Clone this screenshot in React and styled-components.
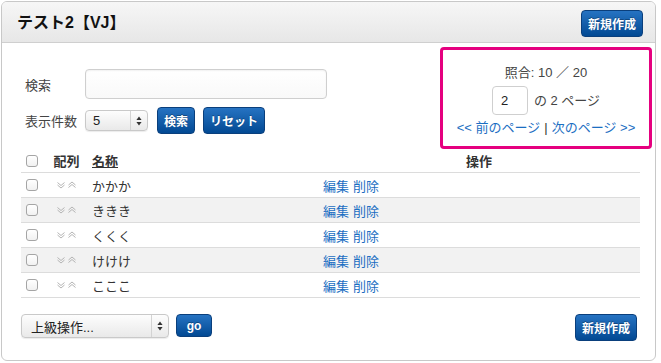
import styled, { createGlobalStyle } from 'styled-components'

const GlobalStyle = createGlobalStyle`
  body {
    margin: 0;
    background: #fff;
    font-family: "Liberation Sans", "Noto Sans CJK JP", sans-serif;
    font-size: 13px;
    color: #333;
  }
`

const Panel = styled.div`
  width: 655px;
  height: 360px;
  margin: 1px 0 0 1px;
  box-sizing: border-box;
  border: 1px solid #c8c8c8;
  border-radius: 6px;
  background: #fff;
  display: flex;
  flex-direction: column;
  overflow: hidden;
`

const Header = styled.div`
  height: 40px;
  flex-shrink: 0;
  display: flex;
  align-items: center;
  justify-content: space-between;
  padding: 0 12px 0 15px;
  background: linear-gradient(#f6f6f6, #e7e7e7);
  border-bottom: 1px solid #cfcfcf;
`

const Title = styled.h1`
  margin: 0 0 2px;
  font-size: 16px;
  font-weight: bold;
  color: #111;
`

const BlueButton = styled.button`
  height: ${p => p.h || 27}px;
  min-width: ${p => p.w || 0}px;
  padding: 0 6px;
  box-sizing: border-box;
  border: 1px solid #0a3f7c;
  border-radius: 4px;
  background: linear-gradient(#2673c2, #024993);
  color: #fff;
  font-family: inherit;
  font-size: 12px;
  font-weight: bold;
  text-shadow: 0 -1px 0 rgba(0, 0, 0, 0.3);
  cursor: pointer;
  margin-top: ${p => p.mt || 0}px;
`

const Body = styled.div`
  flex: 1;
  display: flex;
  flex-direction: column;
  padding: 4px 15px 0 19px;
`

const TopSection = styled.div`
  display: flex;
  justify-content: space-between;
  align-items: flex-start;
`

const SearchForm = styled.div`
  margin-top: 22px;
  display: grid;
  grid-template-columns: 64px auto;
  row-gap: 8px;
  align-items: center;
`

const Label = styled.span`
  padding-left: 4px;
  font-size: 13px;
  color: #444;
`

const TextInput = styled.input`
  width: 242px;
  height: 30px;
  box-sizing: border-box;
  border: 1px solid #cfcfcf;
  border-radius: 4px;
  background: linear-gradient(#fff, #f9f9f9);
  box-shadow: inset 0 1px 2px rgba(0, 0, 0, 0.06);
  outline: none;
`

const ControlRow = styled.div`
  display: flex;
  align-items: center;
  gap: 8px;
`

const SelectBox = styled.div`
  width: ${p => p.w}px;
  height: ${p => p.h}px;
  box-sizing: border-box;
  display: flex;
  align-items: stretch;
  border: 1px solid #c9c9c9;
  border-radius: 4px;
  background: linear-gradient(#fdfdfd, #e9e9e9);
  box-shadow: 0 1px 1px rgba(0, 0, 0, 0.08);
  margin-right: ${p => p.mr || 0}px;
`

const SelectText = styled.span`
  flex: 1;
  display: flex;
  align-items: center;
  padding-left: ${p => p.pl || 8}px;
  font-size: 13px;
  color: #222;
`

const SelectSpin = styled.span`
  width: 16px;
  border-left: 1px solid #d3d3d3;
  display: flex;
  align-items: center;
  justify-content: center;
`

const Pager = styled.div`
  width: 212px;
  height: 102px;
  box-sizing: border-box;
  margin-right: -12px;
  border: 3px solid #e5007f;
  border-radius: 4px;
  display: flex;
  flex-direction: column;
  align-items: center;
  padding-top: 14px;
`

const PagerLine = styled.div`
  line-height: 18px;
  font-size: 13px;
  color: #444;
  display: flex;
  align-items: center;
  gap: 6px;
  margin-top: ${p => p.mt || 0}px;
`

const PageInput = styled.div`
  width: 36px;
  height: 29px;
  box-sizing: border-box;
  border: 1px solid #cfcfcf;
  border-radius: 4px;
  display: flex;
  align-items: center;
  padding-left: 8px;
  font-size: 13px;
  color: #222;
`

const Link = styled.a`
  color: #1b6ec2;
  text-decoration: none;
`

const Sep = styled.span`
  color: #333;
  margin: 0 4px;
`

const Table = styled.div`
  display: grid;
  grid-template-columns: 24px 43px 230px 1fr;
`

const Row = styled.div`
  display: contents;
  & > div {
    height: ${p => (p.head ? 23 : 24)}px;
    border-bottom: 1px solid #dcdcdc;
    background: ${p => (p.shade ? '#f2f2f2' : 'transparent')};
    display: flex;
    align-items: center;
  }
`

const Cell = styled.div`
  justify-content: ${p => (p.center ? 'center' : 'flex-start')};
  padding-left: ${p => p.pl || 0}px;
  font-size: 13px;
  font-weight: ${p => (p.bold ? 'bold' : 'normal')};
  color: #333;
`

const SortLink = styled.span`
  text-decoration: underline;
`

const Check = styled.span`
  width: 12px;
  height: 12px;
  box-sizing: border-box;
  border: 1px solid #a5a5a5;
  border-radius: 3px;
  background: linear-gradient(#fff, #f1f1f1);
`

const ActionLink = styled(Link)`
  margin-right: 4px;
`

const BottomBar = styled.div`
  display: flex;
  align-items: flex-start;
  margin-top: 16px;
`

const Spacer = styled.div`
  flex: 1;
`

const Updown = () => (
  <svg width="6" height="10" viewBox="0 0 6 10">
    <path d="M3 0.5 L5.6 4 H0.4 Z M3 9.5 L5.6 6 H0.4 Z" fill="#333" />
  </svg>
)

const SortArrows = () => (
  <svg width="20" height="8" viewBox="0 0 20 8" fill="none" stroke="#b4b4b4" strokeWidth="1">
    <polyline points="0.5,1.5 4,4.5 7.5,1.5" />
    <polyline points="0.5,4 4,7 7.5,4" />
    <polyline points="11.5,4 15,1 18.5,4" />
    <polyline points="11.5,6.5 15,3.5 18.5,6.5" />
  </svg>
)

const items = ['かかか', 'ききき', 'くくく', 'けけけ', 'こここ']

const App = () => {
  return (
    <>
      <GlobalStyle />
      <Panel>
        <Header>
          <Title>テスト2【VJ】</Title>
          <BlueButton w={59} mt={2}>新規作成</BlueButton>
        </Header>
        <Body>
          <TopSection>
            <SearchForm>
              <Label>検索</Label>
              <TextInput />
              <Label>表示件数</Label>
              <ControlRow>
                <SelectBox w={63} h={21} mr={1}>
                  <SelectText pl={7}>5</SelectText>
                  <SelectSpin><Updown /></SelectSpin>
                </SelectBox>
                <BlueButton w={38}>検索</BlueButton>
                <BlueButton w={60}>リセット</BlueButton>
              </ControlRow>
            </SearchForm>
            <Pager>
              <PagerLine>照合: 10 ／ 20</PagerLine>
              <PagerLine mt={4}>
                <PageInput>2</PageInput>
                <span>の 2 ページ</span>
              </PagerLine>
              <PagerLine mt={4}>
                <span>
                  <Link href="#">&lt;&lt; 前のページ</Link>
                  <Sep>|</Sep>
                  <Link href="#">次のページ &gt;&gt;</Link>
                </span>
              </PagerLine>
            </Pager>
          </TopSection>

          <Table>
            <Row head>
              <Cell pl={5}><Check /></Cell>
              <Cell center bold>配列</Cell>
              <Cell pl={4} bold><SortLink>名称</SortLink></Cell>
              <Cell center bold>操作</Cell>
            </Row>
            {items.map((name, i) => (
              <Row key={name} shade={i % 2 === 1}>
                <Cell pl={5}><Check /></Cell>
                <Cell center><SortArrows /></Cell>
                <Cell pl={4}>{name}</Cell>
                <Cell pl={5}>
                  <ActionLink href="#">編集</ActionLink>
                  <Link href="#">削除</Link>
                </Cell>
              </Row>
            ))}
          </Table>

          <BottomBar>
            <SelectBox w={148} h={24} mr={7}>
              <SelectText pl={9}>上級操作...</SelectText>
              <SelectSpin><Updown /></SelectSpin>
            </SelectBox>
            <BlueButton w={36} h={23}>go</BlueButton>
            <Spacer />
            <BlueButton w={59} style={{ marginRight: 3 }}>新規作成</BlueButton>
          </BottomBar>
        </Body>
      </Panel>
    </>
  )
}

export default App
